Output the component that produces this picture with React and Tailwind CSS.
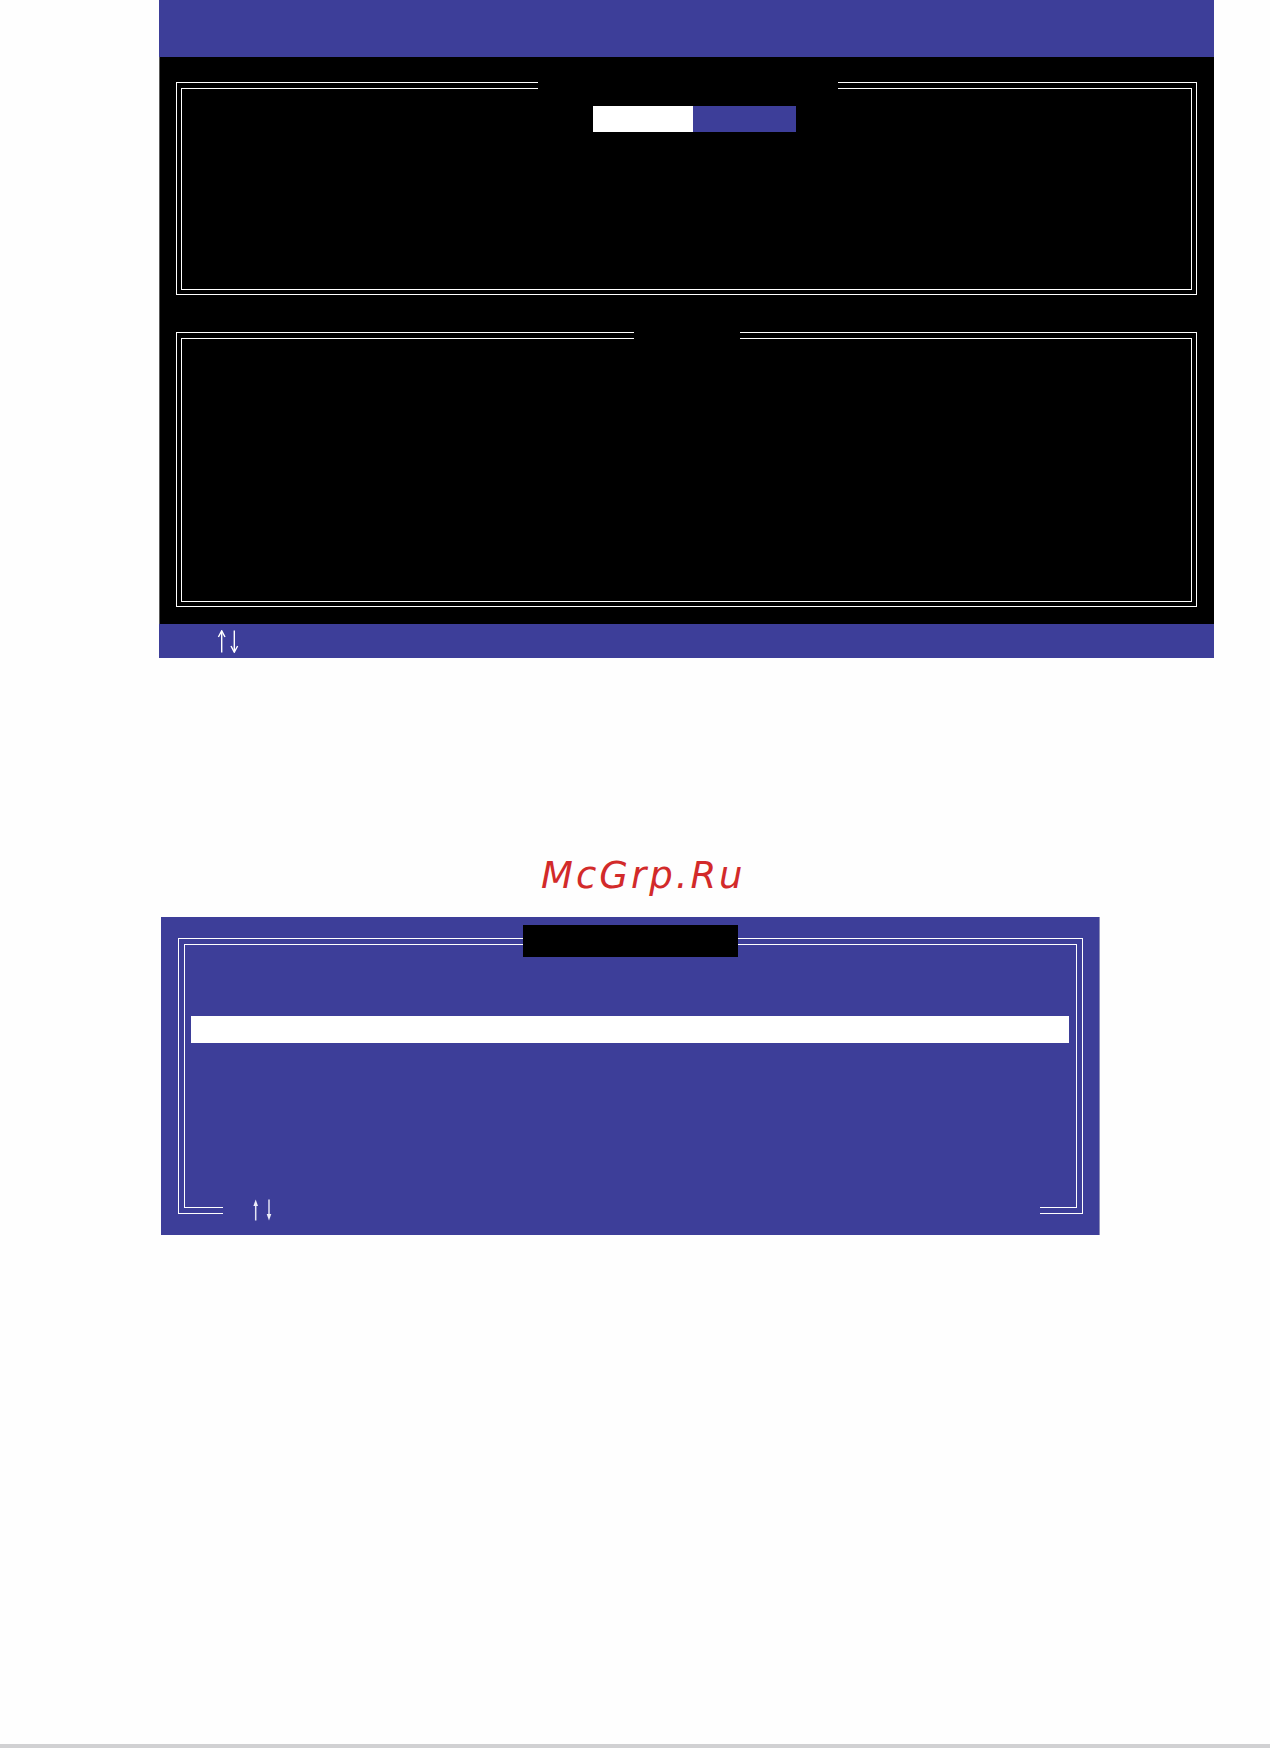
import React from "react";

// thin ↑↓ pair used in the key-hint bars
const ArrowsThin = () => (
  <svg width="26" height="23" viewBox="0 0 26 23" fill="none" stroke="#fff" strokeWidth="1.4">
    <path d="M6.7 22.5V1.2" />
    <path d="M3.4 7L6.7 0.8L10 7" />
    <path d="M19.3 0.5V21.8" />
    <path d="M16 16L19.3 22.2L22.6 16" />
  </svg>
);

const ArrowsSolid = () => (
  <svg width="21" height="22" viewBox="0 0 21 22" fill="none">
    <path d="M3.7 21.5V4" stroke="#e4e5f4" strokeWidth="1.5" />
    <path d="M1.4 7L3.7 0.5L6 7Z" fill="#eeeef8" />
    <path d="M17 0.5V18" stroke="#e4e5f4" strokeWidth="1.5" />
    <path d="M14.7 15L17 21.5L19.3 15Z" fill="#eeeef8" />
  </svg>
);

// double-ruled box with an opening in the top rule where a title would sit
const DoubleFrame = ({ height, gapLeft, gapWidth, gapColor, children }) => (
  <div
    className="relative border border-white pt-[5px] pb-[4px] px-[4px]"
    style={{ height }}
  >
    <div className="h-full border border-white">{children}</div>
    <span
      className={`absolute top-[-1px] h-[8px] ${gapColor}`}
      style={{ left: gapLeft, width: gapWidth }}
    />
  </div>
);

export default function App() {
  return (
    <div className="h-[1748px] flex flex-col bg-[#fefefe] font-['DejaVu_Sans',sans-serif]">
      {/* utility screen */}
      <div className="ml-[159px] w-[1055px] flex flex-col">
        <div className="h-[57px] bg-[#3d3e99]" />
        <div className="bg-black border-l border-[#5a5a5a] pl-[16px] pr-[17px] pt-[25px] pb-[17px] flex flex-col gap-[37px]">
          <DoubleFrame height={213} gapLeft={361} gapWidth={300} gapColor="bg-black">
            <div className="pt-[17px] pl-[411px] flex">
              <div className="w-[100px] h-[26px] bg-white" />
              <div className="w-[103px] h-[26px] bg-[#3d3e99]" />
            </div>
          </DoubleFrame>
          <DoubleFrame height={275} gapLeft={457} gapWidth={106} gapColor="bg-black" />
        </div>
        <div className="h-[34px] bg-[#3d3e99] pl-[56px] pt-[6px]">
          <ArrowsThin />
        </div>
      </div>

      <div className="mt-[200px] h-[36px] pl-[541px] leading-[36px] text-[37px] italic tracking-[3px] text-[#d22a2a]">
        McGrp.Ru
      </div>

      {/* pop-up dialog */}
      <div className="mt-[23px] ml-[161px] w-[939px] h-[318px] relative bg-[#3d3e99] border-r border-[#8c8cb8] pl-[17px] pr-[16px] pt-[21px] pb-[21px]">
        <div className="relative h-full border border-white p-[5px]">
          <div className="h-full border border-white px-[6px] pt-[71px]">
            <div className="h-[27px] mr-[1px] bg-white" />
          </div>
          <div className="absolute left-[44px] bottom-[-8px] w-[817px] h-[26px] bg-[#3d3e99] pl-[29px] pt-[4px]">
            <ArrowsSolid />
          </div>
        </div>
        <div className="absolute left-[362px] top-[8px] w-[215px] h-[32px] bg-black" />
      </div>

      <div className="mt-auto h-[4px] bg-[#d1d1d3]" />
    </div>
  );
}
